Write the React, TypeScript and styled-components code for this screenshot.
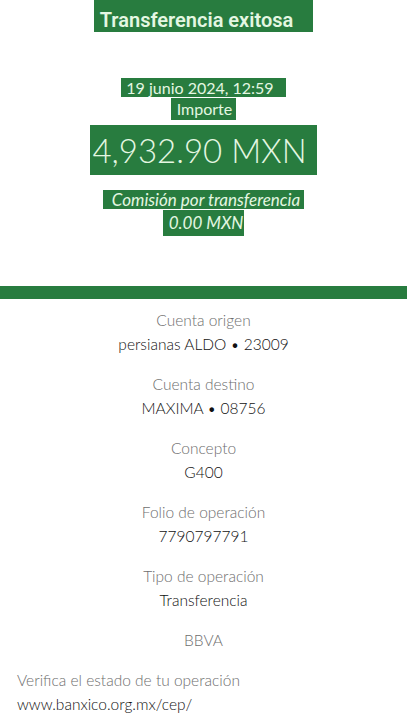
import React from "react";
import styled, { createGlobalStyle } from "styled-components";

const GREEN = "#287c3f";

const Global = createGlobalStyle`
  html, body { margin: 0; padding: 0; background: #ffffff; }
  body { font-family: Lato, "Open Sans", Arial, sans-serif; -webkit-font-smoothing: antialiased; }
`;

const Page = styled.div`
  width: 407px;
  min-height: 724px;
  background: #ffffff;
  display: flex;
  flex-direction: column;
`;

const Header = styled.header`
  display: flex;
  flex-direction: column;
  align-items: center;
`;

const Mark = styled.span<{ $size: number; $h: number; $top: number; $pad: string; $italic?: boolean; $bold?: boolean; $weight?: number }>`
  display: inline-block;
  background: ${GREEN};
  color: #e4f7e2;
  font-family: ${(p) => (p.$bold ? "Roboto, Arial, sans-serif" : "Lato, Arial, sans-serif")};
  font-size: ${(p) => p.$size}px;
  font-weight: ${(p) => p.$weight ?? (p.$bold ? 700 : 400)};
  font-style: ${(p) => (p.$italic ? "italic" : "normal")};
  line-height: ${(p) => p.$h}px;
  height: ${(p) => p.$h}px;
  margin-top: ${(p) => p.$top}px;
  padding: ${(p) => p.$pad};
  white-space: nowrap;
`;

const Bar = styled.div`
  height: 13px;
  background: ${GREEN};
  margin-top: 50px;
`;

const Details = styled.section`
  display: flex;
  flex-direction: column;
  gap: 16px;
  padding-top: 9px;
`;

const Group = styled.div<{ $left?: boolean }>`
  display: flex;
  flex-direction: column;
  align-items: ${(p) => (p.$left ? "flex-start" : "center")};
  padding-left: ${(p) => (p.$left ? "17px" : "0")};
`;

const Label = styled.div`
  font-size: 15.5px;
  line-height: 24px;
  color: #6e6e6e;
  font-weight: 300;
`;

const Value = styled.div`
  font-size: 15.5px;
  line-height: 24px;
  color: #111111;
  font-weight: 300;
`;

const rows: [string, string][] = [
  ["Cuenta origen", "persianas ALDO • 23009"],
  ["Cuenta destino", "MAXIMA • 08756"],
  ["Concepto", "G400"],
  ["Folio de operación", "7790797791"],
  ["Tipo de operación", "Transferencia"],
];

export default function App() {
  return (
    <Page>
      <Global />
      <Header>
        <Mark $size={20} $h={24} $top={0} $pad="8px 20px 0 6px" $bold $weight={600}>
          Transferencia exitosa
        </Mark>
        <Mark $size={16} $h={19} $top={46} $pad="0 12px 0 5px">
          19 junio 2024, 12:59
        </Mark>
        <Mark $size={16} $h={22} $top={1} $pad="0 4px 0 6px">
          Importe
        </Mark>
        <Mark $size={33} $h={50} $top={5} $pad="0 10px 0 2px" $weight={300}>
          4,932.90 MXN
        </Mark>
        <Mark $size={17} $h={19} $top={15} $pad="0 4px 0 9px" $italic>
          Comisión por transferencia
        </Mark>
        <Mark $size={17} $h={26} $top={1} $pad="0 1px 0 6px" $italic>
          0.00 MXN
        </Mark>
      </Header>
      <Bar />
      <Details>
        {rows.map(([l, v]) => (
          <Group key={l}>
            <Label>{l}</Label>
            <Value>{v}</Value>
          </Group>
        ))}
        <Group>
          <Label>BBVA</Label>
        </Group>
        <Group $left>
          <Label>Verifica el estado de tu operación</Label>
          <Value>www.banxico.org.mx/cep/</Value>
        </Group>
      </Details>
    </Page>
  );
}
